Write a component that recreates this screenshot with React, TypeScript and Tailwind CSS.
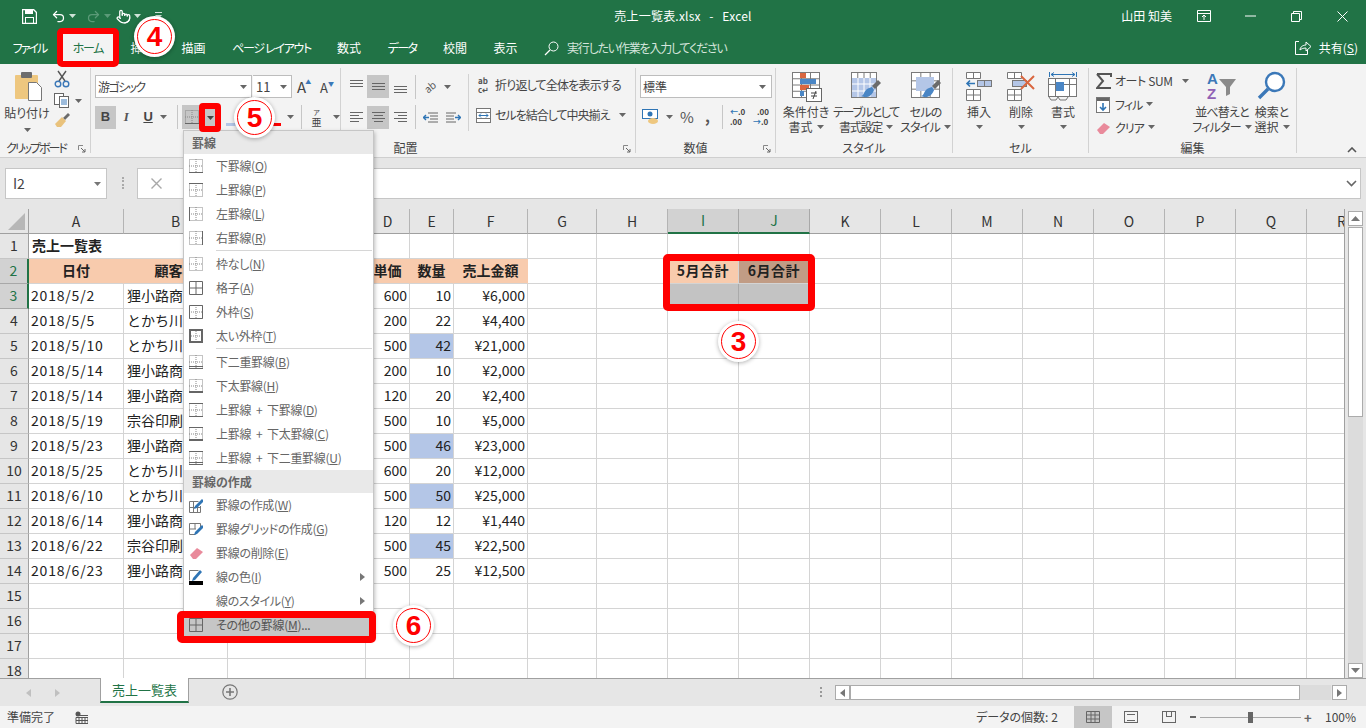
import React from "react";
import { Undo2, Redo2, Pointer } from "lucide-react";

const Caret = ({ c = "#666" }: { c?: string }) => (
  <svg width="7" height="4" className="shrink-0">
    <path d="M0 0h7L3.5 4z" fill={c} />
  </svg>
);

const Launcher = () => (
  <svg width="8" height="8" className="shrink-0">
    <path d="M.5 5V.5H5" fill="none" stroke="#888" />
    <path d="M3 3l4 4M7 4v3H4" fill="none" stroke="#666" />
  </svg>
);

const Sep = () => <div className="w-px h-[24px] bg-[#c6c6c6] shrink-0" />;

const Lines = ({ rows, c = "#666" }: { rows: number[][]; c?: string }) => (
  <svg width="15" height="15" className="shrink-0">
    {rows.map((r, i) => (
      <path key={i} d={`M${r[0]} ${r[2] + 0.5}h${r[1]}`} stroke={c} />
    ))}
  </svg>
);

// grid drawn on most of the big ribbon buttons
const MiniGrid = ({ x, y, w, h, cols, rows }: { x: number; y: number; w: number; h: number; cols: number; rows: number }) => (
  <g stroke="#7a7a7a" fill="none">
    <rect x={x + 0.5} y={y + 0.5} width={w} height={h} fill="#fff" />
    {Array.from({ length: cols - 1 }).map((_, i) => (
      <path key={i} d={`M${x + 0.5 + ((i + 1) * w) / cols} ${y}v${h}`} />
    ))}
    {Array.from({ length: rows - 1 }).map((_, i) => (
      <path key={i} d={`M${x} ${y + 0.5 + ((i + 1) * h) / rows}h${w}`} />
    ))}
  </g>
);

const Brush = ({ x, y }: { x: number; y: number }) => (
  <g transform={`translate(${x} ${y})`}>
    <path d="M12 6l6-6 3 3-6 6z" fill="#6b6b6b" />
    <path d="M1 16c3 0 3-5 6-7 2-1 4-2 5-2l2 3c-1 3-3 6-7 7-2 .5-4 0-6-1z" fill="#4a86c5" />
  </g>
);

const BigButton = ({ w, lines, icon, caretLast = true, cls = "" }: { w: number; lines: string[]; icon: React.ReactNode; caretLast?: boolean; cls?: string }) => (
  <div className={`flex flex-col items-center shrink-0 ${cls}`} style={{ width: w }}>
    <div className="h-[36px] flex items-start justify-center pt-[3px]">{icon}</div>
    {lines.map((l, i) => (
      <div key={i} className="h-[14px] leading-[14px] mt-[1px] flex items-center gap-[4px] whitespace-nowrap">
        {l}
        {caretLast && i === lines.length - 1 && <Caret />}
      </div>
    ))}
    {!caretLast && (
      <div className="h-[14px] mt-[1px] flex items-center">
        <Caret />
      </div>
    )}
  </div>
);

const Group = ({ w, label, launcher, labelCls = "", children }: { w: number; label: string; launcher?: boolean; labelCls?: string; children: React.ReactNode }) => (
  <div className="h-[85px] mt-[4px] border-r border-[#d2d2d2] flex flex-col shrink-0" style={{ width: w }}>
    <div className="flex-1 min-h-0">{children}</div>
    <div className={`h-[16px] flex items-center justify-center relative leading-none pt-[5px] whitespace-nowrap ${labelCls}`}>
      {label}
      {launcher && (
        <span className="absolute right-[4px] bottom-0">
          <Launcher />
        </span>
      )}
    </div>
  </div>
);

const Ribbon = () => (
  <div className="h-[94px] bg-[#f3f3f3] border-b border-[#cfcfcf] flex text-[12px] text-[#444] shrink-0">
    {/* clipboard */}
    <Group w={91} label="クリップボード" launcher labelCls="pr-[18px] tracking-[-2px]">
      <div className="flex">
        <div className="w-[54px] flex flex-col items-center pt-[3px]">
          <svg width="30" height="31" className="ml-[3px]">
            <rect x="1" y="4" width="23" height="24" rx="1" fill="#eec77f" />
            <rect x="7" y="1" width="11" height="6" rx="1" fill="#6d6d6d" />
            <path d="M14.5 11.5h8l5 5v13h-13z" fill="#fff" stroke="#777" />
          </svg>
          <div className="leading-[14px] mt-[4px] whitespace-nowrap">貼り付け</div>
          <div className="mt-[8px]">
            <Caret />
          </div>
        </div>
        <div className="pt-[2px] flex flex-col gap-[5px]">
          <svg width="16" height="18">
            <path d="M4 1l7 10M12 1L5 11" stroke="#555" fill="none" strokeWidth="1.4" />
            <circle cx="4" cy="14" r="2.8" fill="none" stroke="#3b78b8" strokeWidth="1.4" />
            <circle cx="12" cy="14" r="2.8" fill="none" stroke="#3b78b8" strokeWidth="1.4" />
          </svg>
          <div className="flex items-center gap-[5px]">
            <svg width="16" height="15">
              <rect x=".5" y=".5" width="9" height="11" fill="#fff" stroke="#666" />
              <rect x="5.5" y="3.5" width="9" height="11" fill="#fff" stroke="#666" />
              <path d="M7 7h6M7 9h6M7 11h6" stroke="#3b78b8" />
            </svg>
            <Caret />
          </div>
          <svg width="16" height="14">
            <path d="M9 5l5-5 2 2-5 5z" fill="#6b6b6b" />
            <path d="M1 11l7-7 4 4-5 6H3z" fill="#e9c27c" />
          </svg>
        </div>
      </div>
    </Group>
    {/* font */}
    <Group w={250} label="フォント">
      <div className="pl-[4px] pt-[7px] flex items-center h-[30px]">
        <div className="w-[157px] h-[23px] bg-white border border-[#bdbdbd] flex items-center justify-between pl-[2px] pr-[4px] tracking-[-1.6px]">
          游ゴシック
          <Caret />
        </div>
        <div className="w-[39px] h-[23px] bg-white border border-[#bdbdbd] border-l-0 ml-px flex items-center justify-between pl-[3px] pr-[4px] text-[13px]">
          11
          <Caret />
        </div>
        <div className="ml-[5px] flex items-start text-[15px] leading-none w-[18px]">
          A<span className="text-[#3b78b8] text-[6px] -ml-px">▲</span>
        </div>
        <div className="ml-[5px] flex items-start text-[13px] leading-none w-[18px] pt-[2px]">
          A<span className="text-[#3b78b8] text-[6px]">▼</span>
        </div>
      </div>
      <div className="mt-[7px] pl-[4px] flex items-center h-[24px] relative">
        <div className="w-[22px] h-[23px] bg-[#c6c6c6] flex items-center justify-center font-bold text-[13px] [font-family:'Liberation_Sans',sans-serif]">B</div>
        <div className="w-[22px] text-center italic font-bold text-[13px] text-[#555] [font-family:'Liberation_Serif',serif]">I</div>
        <div className="w-[22px] ml-px text-center font-bold underline text-[13px] [font-family:'Liberation_Sans',sans-serif]">U</div>
        <div className="w-[12px] ml-[2px] flex items-center">
          <Caret />
        </div>
        <div className="ml-[5px]">
          <Sep />
        </div>
        <div className="ml-[4px] w-[33px] h-[24px] bg-[#c6c6c6] flex items-center pl-[3px]">
          <BorderIco solid="M0 13.5h14" />
        </div>
        <div className="ml-[13px] w-[13px] h-[18px] border-b-[3px] border-[#b4c6e7]" />
        <div className="ml-[30px] w-[13px] h-[18px] border-b-[3px] border-[#ff0000]" />
        <div className="ml-[6px]">
          <Caret />
        </div>
        <div className="ml-[7px]">
          <Sep />
        </div>
        <div className="ml-[7px] w-[16px] text-[10px] text-center leading-[11px] flex flex-col items-center">
          <span className="text-[7px] leading-[8px]">ア</span>
          <span>亜</span>
        </div>
        <div className="ml-[9px]">
          <Caret />
        </div>
      </div>
    </Group>
    {/* alignment */}
    <Group w={295} label="配置" launcher labelCls="pr-[165px]">
      <div className="flex">
        <div className="w-[127px] pl-[4px]">
          <div className="pt-[7px] flex items-center h-[30px]">
            <div className="w-[22px] flex justify-center">
              <Lines rows={[[1, 13, 1], [1, 13, 4], [1, 13, 7]]} />
            </div>
            <div className="w-[22px] h-[23px] bg-[#c6c6c6] flex justify-center items-center">
              <Lines rows={[[1, 13, 4], [1, 13, 7], [1, 13, 10]]} />
            </div>
            <div className="w-[22px] flex justify-center">
              <Lines rows={[[1, 13, 7], [1, 13, 10], [1, 13, 13]]} />
            </div>
            <div className="ml-[4px]">
              <Sep />
            </div>
            <div className="ml-[8px] text-[10px] leading-none rotate-[-40deg] text-[#555]">ab</div>
            <div className="ml-[8px]">
              <Caret />
            </div>
          </div>
          <div className="mt-[7px] flex items-center h-[24px]">
            <div className="w-[22px] flex justify-center">
              <Lines rows={[[1, 13, 2], [1, 9, 5], [1, 13, 8], [1, 9, 11]]} />
            </div>
            <div className="w-[22px] h-[23px] bg-[#c6c6c6] flex justify-center items-center">
              <Lines rows={[[1, 13, 2], [3, 9, 5], [1, 13, 8], [3, 9, 11]]} />
            </div>
            <div className="w-[22px] flex justify-center">
              <Lines rows={[[1, 13, 2], [5, 9, 5], [1, 13, 8], [5, 9, 11]]} />
            </div>
            <div className="ml-[4px]">
              <Sep />
            </div>
            <div className="ml-[7px]">
              <svg width="16" height="13">
                <path d="M5 2h10M7 5h8M7 8h8M5 11h10" stroke="#666" />
                <path d="M0 6.5h6M3 4L.5 6.5 3 9" stroke="#2f75b5" strokeWidth="1.4" fill="none" />
              </svg>
            </div>
            <div className="ml-[6px]">
              <svg width="16" height="13">
                <path d="M1 2h10M1 5h8M1 8h8M1 11h10" stroke="#666" />
                <path d="M10 6.5h6M13 4l2.5 2.5L13 9" stroke="#2f75b5" strokeWidth="1.4" fill="none" />
              </svg>
            </div>
          </div>
        </div>
        <div className="h-[57px] mt-[6px] w-px bg-[#d2d2d2]" />
        <div className="pl-[9px] pt-[5px]">
          <div className="flex items-center h-[24px] whitespace-nowrap">
            <span className="text-[8px] leading-[9px] w-[13px] mr-[4px] font-bold text-[#555] flex flex-col">
              <span>ab</span>
              <span>c↵</span>
            </span>
            <span className="tracking-[-0.8px]">折り返して全体を表示する</span>
          </div>
          <div className="mt-[6px] -ml-[2px] flex items-center h-[24px] whitespace-nowrap">
            <svg width="15" height="15" className="mr-[4px]">
              <rect x=".5" y=".5" width="14" height="14" fill="#fff" stroke="#777" />
              <path d="M0 4.5h15M0 10.5h15" stroke="#777" />
              <path d="M3 7.5h9M5 5.5l-2 2 2 2M10 5.5l2 2-2 2" stroke="#2f75b5" fill="none" />
            </svg>
            <span className="tracking-[-1px]">セルを結合して中央揃え</span>
            <span className="ml-[10px]">
              <Caret />
            </span>
          </div>
        </div>
      </div>
    </Group>
    {/* number */}
    <Group w={140} label="数値" launcher labelCls="pr-[20px]">
      <div className="pl-[4px] pt-[7px]">
        <div className="w-[132px] h-[23px] bg-white border border-[#bdbdbd] flex items-center justify-between pl-[2px] pr-[5px]">
          標準
          <Caret />
        </div>
        <div className="mt-[7px] h-[24px] flex items-center">
          <svg width="17" height="16" className="ml-[2px]">
            <rect x=".5" y=".5" width="15" height="9" fill="#fff" stroke="#2f75b5" />
            <circle cx="8" cy="5" r="2.5" fill="#2f75b5" />
            <ellipse cx="11" cy="12" rx="5" ry="3" fill="#eec77f" />
          </svg>
          <div className="ml-[7px]">
            <Caret />
          </div>
          <div className="ml-[7px] w-[14px] text-[15px] text-center text-[#555]">%</div>
          <div className="ml-[11px] font-bold text-[15px] w-[6px] text-[#555] leading-none -mt-[4px]">,</div>
          <div className="ml-[11px]">
            <Sep />
          </div>
          <div className="ml-[7px] text-[8px] leading-[10px] text-[#444] w-[16px] font-bold whitespace-nowrap flex flex-col">
            <span>
              <span className="text-[#2f75b5]">←</span>.0
            </span>
            <span>.00</span>
          </div>
          <div className="ml-[7px] text-[8px] leading-[10px] text-[#444] w-[16px] font-bold whitespace-nowrap flex flex-col">
            <span className="text-right">.00</span>
            <span>
              <span className="text-[#2f75b5]">→</span>.0
            </span>
          </div>
        </div>
      </div>
    </Group>
    {/* styles */}
    <Group w={177} label="スタイル">
      <div className="flex pl-[4px]">
        <BigButton
          w={52}
          lines={["条件付き", "書式"]}
          icon={
            <svg width="31" height="31">
              <MiniGrid x={1} y={1} w={27} h={25} cols={3} rows={4} />
              <rect x="9" y="2" width="6" height="5" fill="#d9663f" />
              <rect x="9" y="8" width="16" height="5" fill="#4a86c5" />
              <rect x="9" y="14" width="9" height="5" fill="#d9663f" />
              <rect x="9" y="20" width="4" height="5" fill="#4a86c5" />
              <rect x="15.5" y="17.5" width="15" height="13" fill="#fff" stroke="#666" />
              <path d="M20 22h6M20 25h6M25 20l-3 8" stroke="#444" fill="none" />
            </svg>
          }
        />
        <BigButton
          w={68}
          cls="tracking-[-1.3px]"
          lines={["テーブルとして", "書式設定"]}
          icon={
            <svg width="32" height="31">
              <MiniGrid x={1} y={1} w={25} h={25} cols={4} rows={4} />
              <rect x="2" y="7" width="24" height="19" fill="#b4c6e7" />
              <path d="M8 7v19M14 7v19M20 7v19M2 13h24M2 20h24" stroke="#fff" />
              <Brush x={10} y={9} />
            </svg>
          }
        />
        <BigButton
          w={51}
          cls="tracking-[-0.8px]"
          lines={["セルの", "スタイル"]}
          icon={
            <svg width="32" height="31">
              <MiniGrid x={1} y={1} w={28} h={25} cols={3} rows={3} />
              <rect x="6" y="6" width="18" height="14" fill="#b4c6e7" />
              <Brush x={10} y={9} />
            </svg>
          }
        />
      </div>
    </Group>
    {/* cells */}
    <Group w={136} label="セル">
      <div className="flex pl-[5px]">
        <BigButton
          w={42}
          lines={["挿入"]}
          caretLast={false}
          icon={
            <svg width="28" height="30">
              <path d="M1.5 1.5h14v6h-14zM8.5 1.5v6M1.5 18.5h14v11h-14zM1.5 24h14M8.5 18v11" fill="#fff" stroke="#777" />
              <rect x="12.5" y="9.5" width="14" height="6" fill="#b4c6e7" stroke="#777" />
              <path d="M19.5 9.5v6" stroke="#777" />
              <path d="M2 12.5h8M5 9.5l-3 3 3 3" stroke="#2f75b5" strokeWidth="1.6" fill="none" />
            </svg>
          }
        />
        <BigButton
          w={42}
          lines={["削除"]}
          caretLast={false}
          icon={
            <svg width="30" height="30">
              <path d="M1.5 1.5h14v6h-14zM8.5 1.5v6M1.5 18.5h14v11h-14zM1.5 24h14M8.5 18v11" fill="#fff" stroke="#777" />
              <rect x="6.5" y="9.5" width="14" height="6" fill="#b4c6e7" stroke="#777" />
              <path d="M15 5l13 13M28 5L15 18" stroke="#d9663f" strokeWidth="2" />
            </svg>
          }
        />
        <BigButton
          w={42}
          lines={["書式"]}
          caretLast={false}
          icon={
            <svg width="30" height="30">
              <path d="M1.5 1v5M28.5 1v5M3 3.5h24M3 3.5l3-2M3 3.5l3 2M27 3.5l-3-2M27 3.5l-3 2" stroke="#2f75b5" fill="none" />
              <rect x=".5" y="7.5" width="28" height="18" fill="#fff" stroke="#777" />
              <path d="M7.5 7v18M21.5 7v18M0 13.5h28" stroke="#777" />
              <rect x="8" y="11" width="8" height="9" fill="#4a86c5" />
              <path d="M1 26l2 3h5l2-3M10 26l2 3h6l2-3" fill="none" stroke="#777" />
            </svg>
          }
        />
      </div>
    </Group>
    {/* editing */}
    <Group w={208} label="編集">
      <div className="flex">
        <div className="w-[106px] pl-[7px] pt-[2px] whitespace-nowrap">
          <div className="h-[22px] flex items-center">
            <svg width="16" height="16" className="mr-[3px] shrink-0">
              <path d="M1 1h14v3M15 15H1l6-7-6-7" fill="none" stroke="#555" strokeWidth="2" />
            </svg>
            <span className="tracking-[-0.4px]">オート SUM</span>
            <span className="ml-[9px]">
              <Caret />
            </span>
          </div>
          <div className="h-[24px] mt-[1px] flex items-center">
            <svg width="15" height="16" className="mr-[4px] shrink-0">
              <rect x=".5" y=".5" width="13" height="15" fill="#fff" stroke="#777" />
              <rect x="1" y="1" width="12" height="3" fill="#666" />
              <path d="M7 6v7M4 10l3 3 3-3" stroke="#2f75b5" strokeWidth="1.6" fill="none" />
            </svg>
            <span className="tracking-[-1px]">フィル</span>
            <span className="ml-[4px] -mt-[3px]">
              <Caret />
            </span>
          </div>
          <div className="h-[22px] flex items-center">
            <svg width="15" height="13" className="mr-[4px] shrink-0">
              <path d="M1 8l7-7 6 4-7 7H4z" fill="#e98a9b" />
            </svg>
            <span className="tracking-[-1px]">クリア</span>
            <span className="ml-[4px] -mt-[3px]">
              <Caret />
            </span>
          </div>
        </div>
        <BigButton
          w={54}
          cls="tracking-[-0.8px]"
          lines={["並べ替えと", "フィルター"]}
          icon={
            <svg width="32" height="30">
              <text x="1" y="13" fontSize="15" fontWeight="700" fill="#3b78b8" fontFamily="Liberation Sans">A</text>
              <text x="1" y="28" fontSize="15" fontWeight="700" fill="#9061b5" fontFamily="Liberation Sans">Z</text>
              <path d="M13 8h17l-6 8v7l-4 2v-9z" fill="#8a8a8a" />
            </svg>
          }
        />
        <BigButton
          w={46}
          lines={["検索と", "選択"]}
          icon={
            <svg width="30" height="30">
              <circle cx="18" cy="11" r="9" fill="#fff" stroke="#3b78b8" strokeWidth="2.4" />
              <path d="M11 18L2 27" stroke="#3b78b8" strokeWidth="3.4" />
            </svg>
          }
        />
      </div>
    </Group>
    <div className="flex-1 relative flex justify-end items-end pb-[4px] pr-[9px]">
      <svg width="10" height="6">
        <path d="M1 5l4-4 4 4" fill="none" stroke="#555" strokeWidth="1.6" />
      </svg>
    </div>
  </div>
);

function BorderIco({ solid = "", thick = "" }: { solid?: string; thick?: string }) {
  return (
    <svg width="14" height="14" className="shrink-0">
      <path d="M.5 .5h13v13h-13zM7 0v14M0 7h14" fill="none" stroke="#888" strokeDasharray="1 1" />
      {solid && <path d={solid} fill="none" stroke="#666" />}
      {thick && <path d={thick} fill="none" stroke="#666" strokeWidth="2" />}
    </svg>
  );
}

const MenuItem = ({ label, k, icon, arrow, tail = "", hot }: { label: string; k: string; icon?: React.ReactNode; arrow?: boolean; tail?: string; hot?: boolean }) => (
  <div className={`h-[24px] flex items-center pl-[5px] pr-[8px] whitespace-nowrap ${hot ? "bg-[#c6c6c6] text-[#555]" : "text-[#666]"}`}>
    <div className="w-[14px] shrink-0 flex items-center">{icon}</div>
    <div className="ml-[13px] flex-1 tracking-[-0.3px]">
      {label}(<u>{k}</u>){tail}
    </div>
    {arrow && (
      <svg width="5" height="8">
        <path d="M0 0l5 4-5 4z" fill="#777" />
      </svg>
    )}
  </div>
);

const MenuHead = ({ children }: { children: React.ReactNode }) => (
  <div className="h-[23px] bg-[#e9e9e9] flex items-center pl-[8px] font-bold text-[#666]">{children}</div>
);

const MenuSep = () => <div className="h-[2px] ml-[32px] mr-[1px] border-t border-[#d6d6d6]" />;

const SolidGrid = () => (
  <svg width="14" height="14" className="shrink-0">
    <path d="M.5 .5h13v13H.5zM7 0v14M0 7h14" fill="none" stroke="#666" />
  </svg>
);

const BorderMenu = () => (
  <div className="absolute left-[183px] top-[130px] w-[191px] h-[507px] bg-white border border-[#c6c6c6] shadow-[1px_2px_4px_rgba(0,0,0,0.25)] text-[12px]">
    <MenuHead>罫線</MenuHead>
    <MenuItem label="下罫線" k="O" icon={<BorderIco solid="M0 13.5h14" />} />
    <MenuItem label="上罫線" k="P" icon={<BorderIco solid="M0 .5h14" />} />
    <MenuItem label="左罫線" k="L" icon={<BorderIco solid="M.5 0v14" />} />
    <MenuItem label="右罫線" k="R" icon={<BorderIco solid="M13.5 0v14" />} />
    <MenuSep />
    <MenuItem label="枠なし" k="N" icon={<BorderIco />} />
    <MenuItem label="格子" k="A" icon={<SolidGrid />} />
    <MenuItem label="外枠" k="S" icon={<BorderIco solid="M.5 .5h13v13H.5z" />} />
    <MenuItem label="太い外枠" k="T" icon={<BorderIco thick="M1 1h12v12H1z" />} />
    <MenuSep />
    <MenuItem label="下二重罫線" k="B" icon={<BorderIco solid="M0 11.5h14M0 13.5h14" />} />
    <MenuItem label="下太罫線" k="H" icon={<BorderIco thick="M0 13h14" />} />
    <MenuItem label={"上罫線\u00a0\u00a0+\u00a0\u00a0下罫線"} k="D" icon={<BorderIco solid="M0 .5h14M0 13.5h14" />} />
    <MenuItem label={"上罫線\u00a0\u00a0+\u00a0\u00a0下太罫線"} k="C" icon={<BorderIco solid="M0 .5h14" thick="M0 13h14" />} />
    <MenuItem label={"上罫線\u00a0\u00a0+\u00a0\u00a0下二重罫線"} k="U" icon={<BorderIco solid="M0 .5h14M0 11.5h14M0 13.5h14" />} />
    <MenuHead>罫線の作成</MenuHead>
    <MenuItem
      label="罫線の作成"
      k="W"
      icon={
        <svg width="15" height="15">
          <path d="M.5 3.5h9M.5 3.5v11h11V8M4.5 4v10M8.5 8v6M1 9.5h10" fill="none" stroke="#777" />
          <path d="M6 8l7-7 2 2-7 7-3 1z" fill="#2f75b5" />
        </svg>
      }
    />
    <MenuItem
      label="罫線グリッドの作成"
      k="G"
      icon={
        <svg width="15" height="15">
          <path d="M.5 1.5h11v4M.5 1.5v11h6M6 1v6M1 7h6" fill="none" stroke="#777" />
          <path d="M6 10l7-7 2 2-7 7-3 1z" fill="#2f75b5" />
        </svg>
      }
    />
    <MenuItem
      label="罫線の削除"
      k="E"
      icon={
        <svg width="15" height="13">
          <path d="M1 8l7-7 6 4-7 7H4z" fill="#e98a9b" />
        </svg>
      }
    />
    <MenuItem
      label="線の色"
      k="I"
      arrow
      icon={
        <svg width="16" height="16">
          <path d="M.5 1.5h9M.5 1.5v10" fill="none" stroke="#777" />
          <path d="M4 9l7-8 2 2-7 8-3 1z" fill="#2f75b5" />
          <rect x="0" y="12" width="16" height="4" fill="#000" />
        </svg>
      }
    />
    <MenuItem label="線のスタイル" k="Y" arrow />
    <MenuItem label="その他の罫線" k="M" tail="..." hot icon={<SolidGrid />} />
  </div>
);

const colWidths = [95, 104, 138, 44, 44, 74, 69, 71, 71, 71, 71, 71, 71, 71, 71, 71, 71, 38];
const colNames = "ABCDEFGHIJKLMNOPQR".split("");

const rows = [
  ["2018/5/2", "狸小路商店", "600", "10", "¥6,000"],
  ["2018/5/5", "とかち川商会", "200", "22", "¥4,400"],
  ["2018/5/10", "とかち川商会", "500", "42", "¥21,000"],
  ["2018/5/14", "狸小路商店", "200", "10", "¥2,000"],
  ["2018/5/14", "狸小路商店", "120", "20", "¥2,400"],
  ["2018/5/19", "宗谷印刷", "500", "10", "¥5,000"],
  ["2018/5/23", "狸小路商店", "500", "46", "¥23,000"],
  ["2018/5/25", "とかち川商会", "600", "20", "¥12,000"],
  ["2018/6/10", "とかち川商会", "500", "50", "¥25,000"],
  ["2018/6/14", "狸小路商店", "120", "12", "¥1,440"],
  ["2018/6/22", "宗谷印刷", "500", "45", "¥22,500"],
  ["2018/6/23", "狸小路商店", "500", "25", "¥12,500"],
];

const cellBase = "h-[25px] pb-[1px] border-r border-b border-[#d4d4d4] flex items-center whitespace-nowrap text-[14px] text-[#222] [font-feature-settings:normal]";

const cellFor = (r: number, c: number) => {
  // r and c are zero based here, r=0 is sheet row 1
  if (r === 0 && c === 0) return <div key={c} className={`${cellBase} font-bold pl-[3px] text-[#111] border-r-0`}>売上一覧表</div>;
  if (r === 1 && c < 6) {
    const heads = ["日付", "顧客名", "商品名", "単価", "数量", "売上金額"];
    return (
      <div key={c} className={`${cellBase} bg-[#f8cbad] justify-center font-bold border-[#f8cbad] border-b-[#d4d4d4] text-[#111]`}>
        {heads[c]}
      </div>
    );
  }
  if (r === 1 && c === 8) return <div key={c} className={`${cellBase} bg-[#f8cbad] justify-center font-bold text-[13px] tracking-[0.5px] text-[#111]`}>5月合計</div>;
  if (r === 1 && c === 9) return <div key={c} className={`${cellBase} bg-[#c19c85] justify-center font-bold text-[13px] tracking-[0.5px] text-[#111]`}>6月合計</div>;
  if (r === 2 && (c === 8 || c === 9)) return <div key={c} className={`${cellBase} bg-[#c3c3c3] border-r-[#aaa] border-b-[#c3c3c3]`} />;
  const row = r >= 2 && r < 14 ? rows[r - 2] : null;
  if (row && c === 0) return <div key={c} className={`${cellBase} pl-[2px] tracking-[0.8px]`}>{row[0]}</div>;
  if (row && c === 1) return <div key={c} className={`${cellBase} pl-[3px] overflow-hidden`}>{row[1]}</div>;
  if (row && c === 3) return <div key={c} className={`${cellBase} justify-end pr-[2px]`}>{row[2]}</div>;
  if (row && c === 4) {
    const hot = ["42", "46", "50", "45"].includes(row[3]);
    return (
      <div key={c} className={`${cellBase} justify-end pr-[2px] ${hot ? "bg-[#b4c6e7] border-[#b4c6e7]" : ""}`}>
        {row[3]}
      </div>
    );
  }
  if (row && c === 5) return <div key={c} className={`${cellBase} justify-end pr-[2px]`}>{row[4]}</div>;
  return <div key={c} className={cellBase} />;
};

const Sheet = () => (
  <div className="flex-1 min-w-0 overflow-hidden bg-white relative">
    <div
      className="grid [font-feature-settings:normal]"
      style={{ gridTemplateColumns: `29px ${colWidths.map((w) => w + "px").join(" ")}` }}
    >
      <div className="h-[25px] bg-[#e6e6e6] border-b border-[#a0a0a0] border-r flex items-end justify-end pr-[3px] pb-[3px]">
        <svg width="17" height="17">
          <path d="M17 0v17H0z" fill="#b7b7b7" />
        </svg>
      </div>
      {colNames.map((n) => {
        const sel = n === "I" || n === "J";
        return (
          <div
            key={n}
            className={`h-[25px] border-r flex items-center overflow-hidden text-[14px] ${n === "R" ? "pl-[30px]" : "justify-center"} ${
              sel ? "bg-[#d2d2d2] border-[#a8a8a8] border-b-2 border-b-[#217346] text-[#217346]" : "bg-[#e6e6e6] border-[#b4b4b4] border-b border-b-[#a0a0a0] text-[#333]"
            }`}
          >
            {n}
          </div>
        );
      })}
      {Array.from({ length: 18 }).map((_, r) => (
        <React.Fragment key={r}>
          <div
            className={`h-[25px] pb-[1px] flex items-center justify-center text-[14px] border-b ${
              r === 1 || r === 2
                ? "bg-[#d2d2d2] border-[#a8a8a8] border-r-2 border-r-[#217346] text-[#217346]"
                : "bg-[#e6e6e6] border-[#c6c6c6] border-r border-r-[#a0a0a0] text-[#333]"
            }`}
          >
            {r + 1}
          </div>
          {colWidths.map((_, c) => cellFor(r, c))}
        </React.Fragment>
      ))}
    </div>
  </div>
);

const ScrollBox = ({ children, cls = "" }: { children?: React.ReactNode; cls?: string }) => (
  <div className={`bg-white border border-[#ababab] flex items-center justify-center shrink-0 ${cls}`}>{children}</div>
);

const VScroll = () => (
  <div className="w-[22px] bg-[#e6e6e6] border-l border-[#a0a0a0] pl-[3px] flex flex-col pt-[2px] shrink-0">
    <ScrollBox cls="w-[15px] h-[15px]">
      <svg width="9" height="5">
        <path d="M0 5h9L4.5 0z" fill="#777" />
      </svg>
    </ScrollBox>
    <ScrollBox cls="w-[15px] h-[190px] mt-[1px]" />
    <div className="flex-1 w-[15px] bg-[#dcdcdc]" />
    <ScrollBox cls="w-[15px] h-[15px]">
      <svg width="9" height="5">
        <path d="M0 0h9L4.5 5z" fill="#777" />
      </svg>
    </ScrollBox>
  </div>
);

const SheetTabs = () => (
  <div className="h-[28px] bg-[#e6e6e6] border-t border-[#a0a0a0] flex shrink-0">
    <div className="w-[100px] flex items-center pl-[26px] gap-[24px] text-[#c0c0c0]">
      <svg width="5" height="8"><path d="M5 0v8L0 4z" fill="#c0c0c0" /></svg>
      <svg width="5" height="8"><path d="M0 0v8l5-4z" fill="#c0c0c0" /></svg>
    </div>
    <div className="w-[89px] h-[25px] -mt-px bg-white border-x border-[#a0a0a0] border-b-2 border-b-[#217346] text-[#217346] flex items-center justify-center text-[13px]">
      売上一覧表
    </div>
    <div className="ml-[33px] mt-[5px]">
      <svg width="16" height="16">
        <circle cx="8" cy="8" r="7.2" fill="none" stroke="#777" strokeWidth="1.2" />
        <path d="M4 8h8M8 4v8" stroke="#777" strokeWidth="1.6" />
      </svg>
    </div>
    <div className="ml-[582px] mt-[8px] w-[2px] h-[10px] border-l-2 border-dotted border-[#999]" />
    <div className="ml-[13px] mt-[6px] flex items-start">
      <ScrollBox cls="w-[15px] h-[15px]">
        <svg width="5" height="8"><path d="M5 0v8L0 4z" fill="#777" /></svg>
      </ScrollBox>
      <ScrollBox cls="w-[450px] h-[15px]" />
      <div className="w-[31px] h-[15px] bg-[#dcdcdc]" />
      <ScrollBox cls="w-[15px] h-[15px] ml-px">
        <svg width="5" height="8"><path d="M0 0v8l5-4z" fill="#777" /></svg>
      </ScrollBox>
    </div>
  </div>
);

const StatusBar = () => (
  <div className="h-[22px] bg-[#f3f3f3] flex items-center text-[12px] text-[#444] shrink-0">
    <div className="ml-[7px] w-[68px]">準備完了</div>
    <svg width="13" height="13">
      <circle cx="3" cy="3" r="2.5" fill="#555" />
      <path d="M1 6.5h12v6H1zM4 4.5h9" fill="none" stroke="#555" />
      <path d="M4 6v7M7 6v7M10 6v7M1 9.5h12" stroke="#555" />
    </svg>
    <div className="ml-[888px] w-[98px] whitespace-nowrap">データの個数: 2</div>
    <div className="w-[38px] h-[22px] bg-[#c6c6c6] flex items-center justify-center">
      <svg width="14" height="12">
        <path d="M.5 .5h13v11H.5zM.5 4h13M.5 8h13M5 0v12M9 0v12" fill="none" stroke="#666" />
      </svg>
    </div>
    <div className="ml-[12px] w-[14px] h-[12px] border border-[#666] flex items-center justify-center">
      <div className="w-[8px] h-[7px] border-y border-[#666]" />
    </div>
    <div className="ml-[24px] w-[14px] h-[12px] border border-[#666] border-t-0 flex justify-center relative">
      <div className="w-[6px] h-[6px] border-x border-b border-[#666]" />
      <div className="absolute left-0 right-0 top-0 h-px bg-[#666]" />
    </div>
    <div className="ml-[14px] w-[6px] h-[2px] bg-[#666]" />
    <div className="ml-[4px] w-[101px] h-px bg-[#a8a8a8] relative flex justify-center items-center">
      <div className="w-[5px] h-[11px] bg-[#666]" />
    </div>
    <div className="ml-[3px] text-[#666] font-bold text-[13px] leading-none w-[10px]">+</div>
    <div className="ml-[11px]">100%</div>
  </div>
);

const Circled = ({ n, cls }: { n: string; cls: string }) => (
  <div className={`absolute w-[41px] h-[41px] rounded-full bg-white shadow-[0_1px_4px_rgba(0,0,0,0.3)] flex items-center justify-center ${cls}`}>
    <div className="w-[35px] h-[35px] rounded-full border-[1.5px] border-[#ff0000] flex items-center justify-center text-[#ff0000] text-[28px] font-bold leading-none [font-family:'Liberation_Sans',sans-serif]">
      {n}
    </div>
  </div>
);

export default function App() {
  const tabs: [string, number, string][] = [
    ["ファイル", 59, "tracking-[-2px]"],
    ["ホーム", 58, "tracking-[-1.3px]"],
    ["挿入", 51, ""],
    ["描画", 51, ""],
    ["ページ レイアウト", 105, "tracking-[-1.3px]"],
    ["数式", 50, ""],
    ["データ", 56, "tracking-[-1.6px]"],
    ["校閲", 50, ""],
    ["表示", 51, ""],
  ];
  return (
    <div className="relative w-[1366px] h-[728px] overflow-hidden flex flex-col bg-white text-[12px] font-['Noto_Sans_CJK_JP',sans-serif] [font-feature-settings:'palt']">
      {/* title bar */}
      <div className="h-[32px] bg-[#217346] text-white grid grid-cols-[1fr_auto_1fr] items-center shrink-0">
        <div className="flex items-center pl-[22px] h-full">
          <svg width="15" height="15">
            <path d="M.5 .5h11l3 3v11H.5z" fill="none" stroke="#fff" strokeWidth="1.4" />
            <rect x="3" y="1" width="8" height="4" fill="#fff" />
            <rect x="3.5" y="8.5" width="8" height="6" fill="none" stroke="#fff" />
          </svg>
          <Undo2 size={15} className="ml-[14px]" strokeWidth={2} />
          <span className="ml-[3px]">
            <Caret c="#cfe3d8" />
          </span>
          <Redo2 size={15} className="ml-[10px] text-[#5b9a78]" strokeWidth={2} />
          <span className="ml-[3px]">
            <Caret c="#5b9a78" />
          </span>
          <Pointer size={15} className="ml-[5px]" strokeWidth={2} />
          <span className="ml-[3px]">
            <Caret c="#cfe3d8" />
          </span>
          <span className="ml-[14px] flex flex-col gap-[2px] items-center -mt-[2px]">
            <span className="w-[7px] h-px bg-[#cfe3d8]" />
            <Caret c="#cfe3d8" />
          </span>
        </div>
        <div className="whitespace-nowrap -mt-px tracking-[0.2px]">売上一覧表.xlsx&nbsp;&nbsp;&nbsp;-&nbsp;&nbsp;&nbsp;Excel</div>
        <div className="flex items-center justify-end h-full">
          <div className="whitespace-nowrap">山田 知美</div>
          <svg width="14" height="12" className="ml-[25px]">
            <path d="M.5 .5h13v11H.5zM0 3.5h14M7 10V5M5 7l2-2 2 2" fill="none" stroke="#fff" />
          </svg>
          <svg width="11" height="2" className="ml-[34px]">
            <path d="M0 1h11" stroke="#fff" />
          </svg>
          <svg width="11" height="11" className="ml-[35px]">
            <path d="M.5 2.5h8v8h-8zM2.5 2.5v-2h8v8h-2" fill="none" stroke="#fff" />
          </svg>
          <svg width="11" height="11" className="ml-[35px] mr-[18px]">
            <path d="M.5 .5l10 10M10.5 .5l-10 10" stroke="#fff" />
          </svg>
        </div>
      </div>
      {/* ribbon tabs */}
      <div className="h-[32px] bg-[#217346] text-white flex items-center shrink-0">
        {tabs.map(([t, w, tr]) => (
          <div
            key={t}
            style={{ width: w }}
            className={`h-full flex items-center justify-center whitespace-nowrap shrink-0 ${tr} ${t === "ホーム" ? "bg-[#f3f3f3] text-[#217346]" : ""}`}
          >
            {t}
          </div>
        ))}
        <svg width="15" height="15" className="ml-[13px]">
          <circle cx="9.5" cy="5.5" r="4.5" fill="none" stroke="#fff" />
          <path d="M6 9L1 14" stroke="#fff" strokeWidth="1.3" />
        </svg>
        <div className="ml-[8px] whitespace-nowrap text-[#d5e5dc] tracking-[-1.2px]">実行したい作業を入力してください</div>
        <div className="ml-auto mr-[8px] flex items-center gap-[8px] whitespace-nowrap">
          <svg width="16" height="14">
            <path d="M4 .5H.5v13h12V9" fill="none" stroke="#fff" />
            <path d="M5 9c0-3 3-5 6-5V1l5 4.5L11 10V7C8 7 6 8 5 9z" fill="none" stroke="#fff" />
          </svg>
          <span>
            共有(<u>S</u>)
          </span>
        </div>
      </div>
      <Ribbon />
      {/* formula bar */}
      <div className="h-[51px] bg-[#e6e6e6] flex pt-[10px] pl-[5px] pr-[5px] shrink-0">
        <div className="w-[102px] h-[31px] bg-white border border-[#c6c6c6] flex items-center justify-between pl-[7px] pr-[5px] text-[14px] text-[#444]">
          I2
          <Caret c="#777" />
        </div>
        <div className="ml-[15px] mt-[9px] w-[2px] h-[12px] border-l-2 border-dotted border-[#aaa]" />
        <div className="ml-[13px] flex-1 h-[31px] bg-white border border-[#c6c6c6] flex items-center justify-between pl-[13px] pr-[3px]">
          <svg width="11" height="11">
            <path d="M.5 .5l10 10M10.5 .5l-10 10" stroke="#a8a8a8" strokeWidth="1.4" />
          </svg>
          <svg width="11" height="7">
            <path d="M1 1l4.5 4.5L10 1" fill="none" stroke="#666" strokeWidth="1.6" />
          </svg>
        </div>
      </div>
      <div className="flex h-[469px] shrink-0">
        <Sheet />
        <VScroll />
      </div>
      <SheetTabs />
      <StatusBar />

      <BorderMenu />
      {/* annotation layer */}
      <div className="absolute left-[57px] top-[28px] w-[62px] h-[39px] border-[6px] border-[#ff0000] rounded-[5px]" />
      <div className="absolute left-[199px] top-[103px] w-[22px] h-[29px] border-[6px] border-[#ff0000] rounded-[4px]" />
      <div className="absolute left-[205px] top-[109px] w-[10px] h-[17px] bg-[#c6c6c6] flex items-center justify-center">
        <Caret c="#444" />
      </div>
      <div className="absolute left-[663px] top-[254px] w-[152px] h-[57px] border-[7px] border-[#ff0000] rounded-[5px]" />
      <div className="absolute left-[177px] top-[611px] w-[199px] h-[32px] border-[7px] border-[#ff0000] rounded-[5px]" />
      <Circled n="4" cls="left-[134px] top-[16px]" />
      <Circled n="5" cls="left-[234px] top-[97px]" />
      <Circled n="6" cls="left-[393px] top-[605px]" />
      <Circled n="3" cls="left-[718px] top-[321px]" />
    </div>
  );
}
